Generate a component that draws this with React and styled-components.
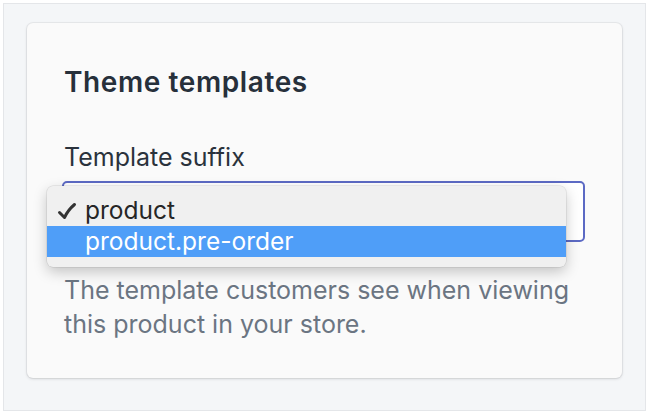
import React from "react";
import styled, { createGlobalStyle } from "styled-components";

const Global = createGlobalStyle`
  html, body { margin: 0; padding: 0; background: #ffffff; }
  body { font-family: Inter, "Noto Sans", "Liberation Sans", sans-serif; -webkit-font-smoothing: antialiased; }
  * { box-sizing: border-box; }
`;

const Frame = styled.div`
  margin: 3px 0 0 3px;
  width: 643px;
  height: 408px;
  border: 1px solid #e4e6e9;
  background: #f4f6f8;
  padding: 19px 23px 32px 23px;
`;

const Card = styled.section`
  height: 100%;
  background: #fafafa;
  border-radius: 6px;
  box-shadow: 0 0 0 1px rgba(63, 63, 68, 0.06), 0 1px 3px rgba(63, 63, 68, 0.18);
  padding: 41px 37px 0 37px;
`;

const Heading = styled.h2`
  margin: 0;
  font-size: 28px;
  line-height: 36px;
  font-weight: 600;
  color: #27303b;
  letter-spacing: 0.6px;
`;

const Field = styled.div`
  margin-top: 41px;
`;

const Label = styled.div`
  font-size: 25px;
  line-height: 32px;
  color: #2a323c;
  margin-bottom: 8px;
`;

const SelectWrap = styled.div`
  position: relative;
  margin-left: -2px;
  width: 523px;
`;

const SelectBox = styled.div`
  height: 61px;
  border: 2px solid #5c6ac4;
  border-radius: 5px;
  background: #ffffff;
`;

const Menu = styled.ul`
  position: absolute;
  left: -15px;
  top: 5px;
  width: 519px;
  margin: 0;
  padding: 9px 0 10px;
  list-style: none;
  background: #f0f0f0;
  border-radius: 6px;
  box-shadow: 0 0 0 0.5px rgba(0, 0, 0, 0.12), 0 5px 14px rgba(0, 0, 0, 0.22);
`;

const Item = styled.li`
  position: relative;
  height: 31px;
  line-height: 31px;
  padding-left: 38px;
  font-size: 24.5px;
  color: ${(p) => (p.$active ? "#ffffff" : "#262626")};
  background: ${(p) => (p.$active ? "#4f9ef8" : "transparent")};
`;

const Check = styled.svg`
  position: absolute;
  left: 10px;
  top: 7px;
  width: 20px;
  height: 18px;
`;

const Help = styled.p`
  margin: 31px 0 0;
  font-size: 25px;
  line-height: 34px;
  color: #6b7582;
  max-width: 530px;
`;

export default function App() {
  return (
    <>
      <Global />
      <Frame>
        <Card>
          <Heading>Theme templates</Heading>
          <Field>
            <Label>Template suffix</Label>
            <SelectWrap>
              <SelectBox />
              <Menu>
                <Item>
                  <Check viewBox="0 0 20 18">
                    <path
                      d="M2.5 10.5 L7.5 15.5 Q11 8 17.5 2.5"
                      fill="none"
                      stroke="#333333"
                      strokeWidth="3"
                      strokeLinecap="round"
                      strokeLinejoin="round"
                    />
                  </Check>
                  product
                </Item>
                <Item $active>product.pre-order</Item>
              </Menu>
            </SelectWrap>
          </Field>
          <Help>The template customers see when viewing this product in your store.</Help>
        </Card>
      </Frame>
    </>
  );
}
